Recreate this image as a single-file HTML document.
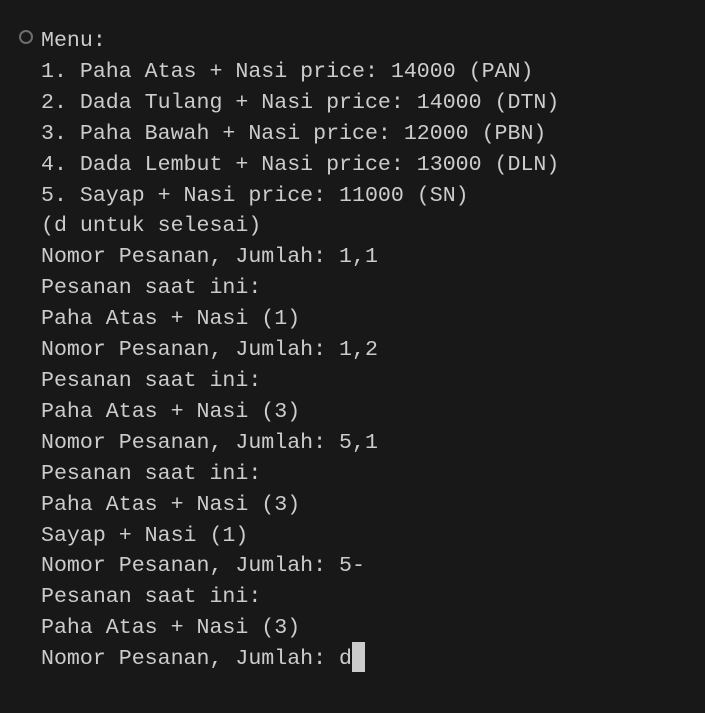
<!DOCTYPE html>
<html><head><style>
html,body{margin:0;padding:0;background:#181818;width:705px;height:713px;overflow:hidden}
pre{position:absolute;left:41px;top:26px;margin:0;font-family:"Liberation Mono",monospace;font-size:21.6px;line-height:30.9px;color:#cccccc}
.c{position:absolute;left:19px;top:30px;width:10px;height:10px;border:2px solid #6e6e6e;border-radius:50%}
.cur{display:inline-block;width:13px;height:30px;background:#cccccc;vertical-align:top;position:relative;top:-2px}
</style></head><body>
<div class="c"></div>
<pre>Menu:
1. Paha Atas + Nasi price: 14000 (PAN)
2. Dada Tulang + Nasi price: 14000 (DTN)
3. Paha Bawah + Nasi price: 12000 (PBN)
4. Dada Lembut + Nasi price: 13000 (DLN)
5. Sayap + Nasi price: 11000 (SN)
(d untuk selesai)
Nomor Pesanan, Jumlah: 1,1
Pesanan saat ini:
Paha Atas + Nasi (1)
Nomor Pesanan, Jumlah: 1,2
Pesanan saat ini:
Paha Atas + Nasi (3)
Nomor Pesanan, Jumlah: 5,1
Pesanan saat ini:
Paha Atas + Nasi (3)
Sayap + Nasi (1)
Nomor Pesanan, Jumlah: 5-
Pesanan saat ini:
Paha Atas + Nasi (3)
Nomor Pesanan, Jumlah: d<span class="cur"></span></pre>
</body></html>
